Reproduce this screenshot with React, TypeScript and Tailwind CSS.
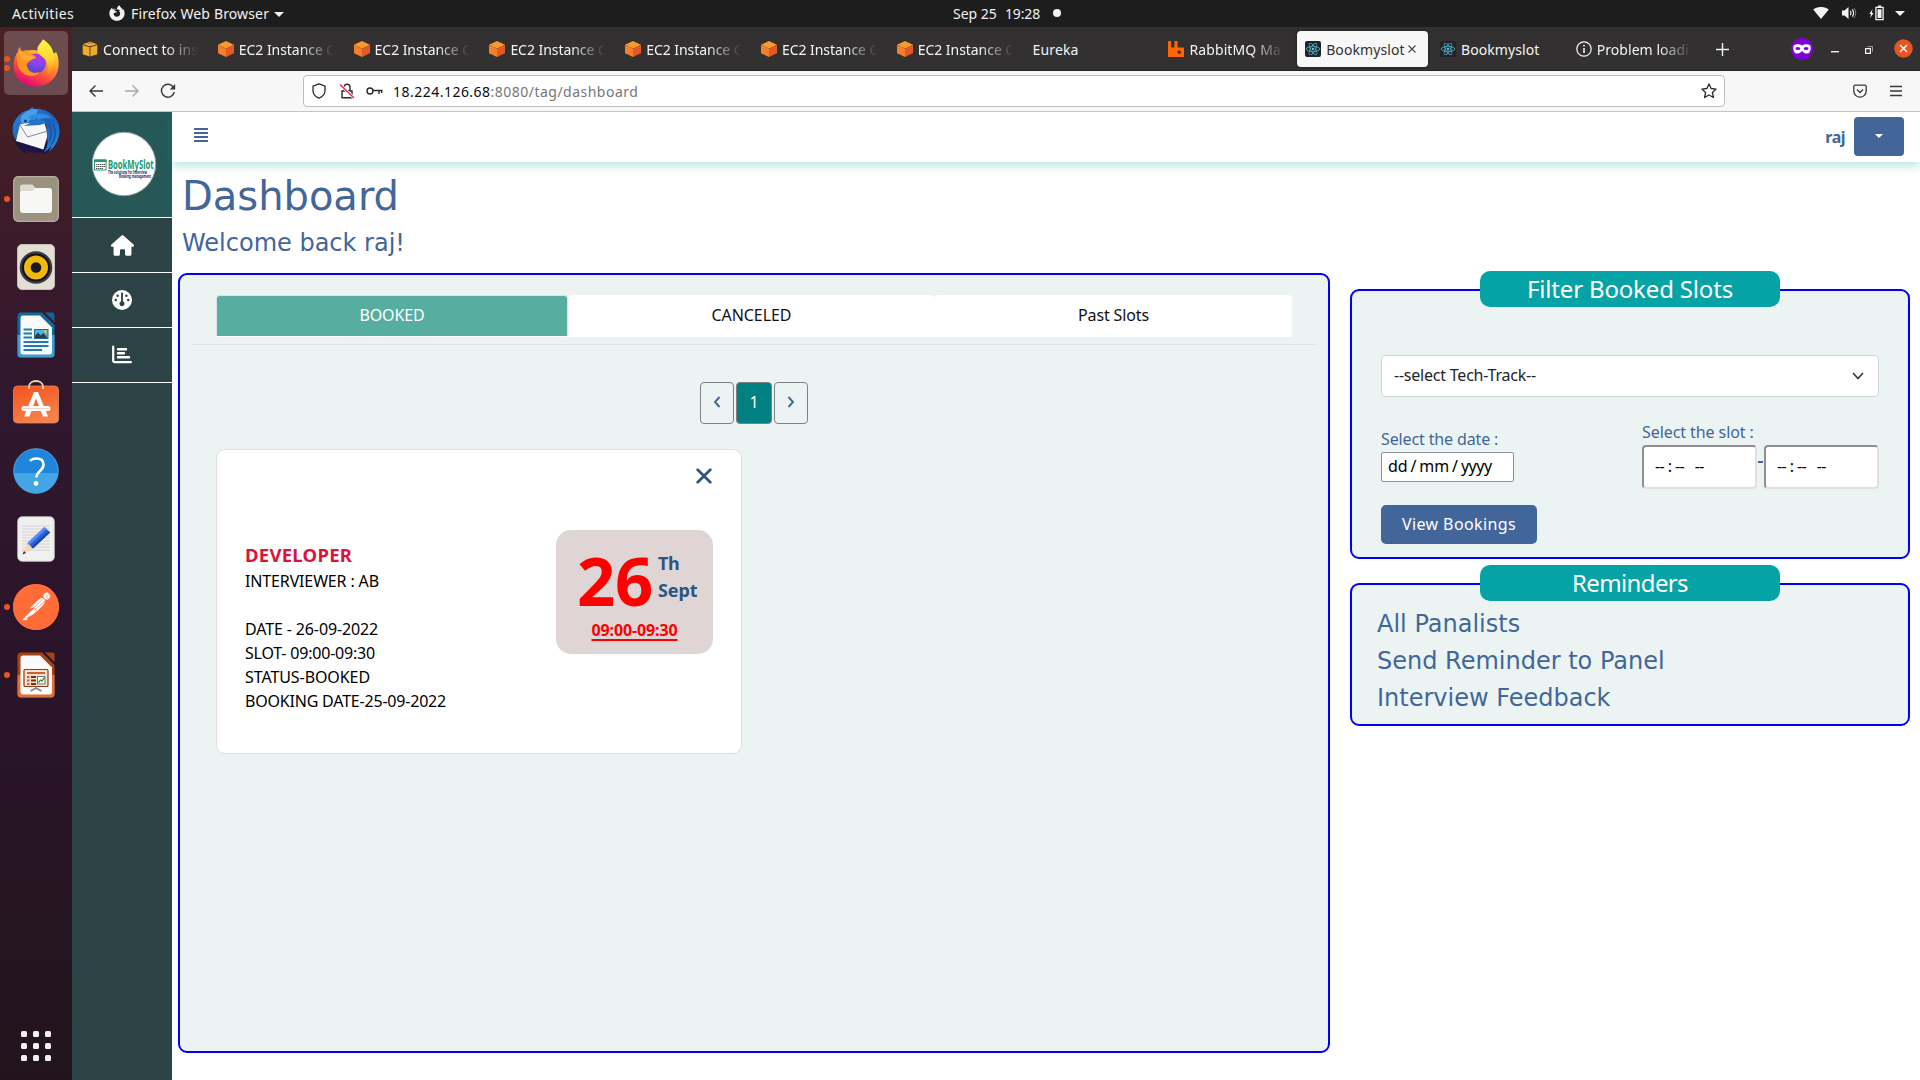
import type { ReactNode } from "react";
import { FaAlignJustify, FaReact } from "react-icons/fa";
import { FaFirefoxBrowser, FaHouse, FaGauge } from "react-icons/fa6";
import { SiPostman, SiRabbitmq } from "react-icons/si";

/* ---------- Top bar ---------- */

function TopBar() {
  return (
    <div className="flex h-[27px] bg-[#1d1d1d] text-[14px] leading-[27px] text-[#f2f2f2]">
      <div className="flex w-[953px]">
        <span className="ml-3 w-[97px] tracking-[0.37px]">Activities</span>
        <FaFirefoxBrowser className="mt-[5px] h-4 w-4" />
        <span className="ml-[6px] w-[138px] whitespace-nowrap tracking-[0.14px]">Firefox Web Browser</span>
        <svg className="ml-[5px] mt-3 h-[5px] w-[10px]" viewBox="0 0 10 5"><path d="M0 0h10L5 5z" fill="#f2f2f2" /></svg>
      </div>
      <div className="flex w-[860px]">
        <span className="w-[52px]">Sep 25</span>
        <span className="w-[48px] tracking-[-0.16px]">19:28</span>
        <span className="mt-[9px] h-2 w-2 rounded-full bg-[#f2f2f2]" />
      </div>
      <svg className="mt-[7px] h-3 w-4" viewBox="0 0 16 12"><path d="M.2 2.6C4.500-.9 11.500-.9 15.800 2.600L8 12z" fill="#f2f2f2" /></svg>
      <svg className="ml-3 mt-[6px] h-[14px] w-4" viewBox="0 0 16 14" fill="none" stroke="#f2f2f2">
        <path d="M1 4.500h2.500L7.500 1v12L3.500 9.500H1z" fill="#f2f2f2" stroke="none" />
        <path d="M9.300 4.800q1.500 2.200 0 4.400M11.300 3.300q2.600 3.700 0 7.400" strokeWidth="1.200" />
        <path d="M13 2q3.600 5 0 10" strokeWidth="1" opacity=".45" />
      </svg>
      <svg className="ml-3 mt-[5px] h-4 w-4" viewBox="0 0 16 16">
        <path d="M3.600 4L.3 9h1.800L1.200 13 4.600 8H2.800z" fill="#f2f2f2" />
        <path d="M6.900 2.400h7.200v12.200H6.900z" fill="none" stroke="#f2f2f2" strokeWidth="1.300" />
        <path d="M8.800.4h3.400v2H8.800zM8.500 4.300h4v8.700h-4z" fill="#f2f2f2" />
      </svg>
      <svg className="ml-[10px] mt-[11px] h-[5px] w-[10px]" viewBox="0 0 10 5"><path d="M0 0h10L5 5z" fill="#f2f2f2" /></svg>
    </div>
  );
}

/* ---------- Dock ---------- */

function FirefoxIcon() {
  return (
    <svg className="h-12 w-12" viewBox="0 0 48 48">
      <defs>
        <linearGradient id="ffBody" x1=".8" y1="0" x2=".3" y2="1">
          <stop offset="0" stopColor="#fff44f" /><stop offset=".35" stopColor="#ffb02e" />
          <stop offset=".65" stopColor="#ff5b36" /><stop offset="1" stopColor="#e6007a" />
        </linearGradient>
        <linearGradient id="ffFlame" x1=".5" y1="0" x2=".5" y2="1">
          <stop offset="0" stopColor="#fff44f" /><stop offset=".5" stopColor="#ffd62f" /><stop offset="1" stopColor="#ff8a16" stopOpacity=".2" />
        </linearGradient>
        <radialGradient id="ffGlobe" cx=".6" cy=".15" r=".9">
          <stop offset="0" stopColor="#b833e1" /><stop offset=".45" stopColor="#8a45f0" /><stop offset="1" stopColor="#4a46c0" />
        </radialGradient>
      </defs>
      <path d="M24 47.500C11 47.500 1.600 38.500 1.600 26.500c0-6 1.800-10.500 4.700-14.500C6.200 10 6.800 9 8 8c.2 2.200 1 3.500 2.300 4.500 2-1.200 4.500-1.500 6.700-1 4-1 9-.5 12 2C26 10 29 4 31 .5c5 3.500 9 8.500 10 14 1.500-.5 2.500-.8 3.200-1.500 2 4 2.700 8.500 2.400 13C46 38.500 36.500 47.500 24 47.500z" fill="url(#ffBody)" />
      <circle cx="24" cy="24.500" r="10" fill="url(#ffGlobe)" />
      <path d="M31 .5C37 4 40.500 9 41.500 14.500c3 9-.5 19-8.500 24C38 31 36.500 22 30.500 18c-3.500-2.500-5.500-5-5-9C26 6 29 4 31 .5z" fill="url(#ffFlame)" />
      <path d="M6.500 11.500c3.500 0 7.500 1.500 10 4 3.500-.5 6.500.5 8 3.500-3 .3-4 1.500-6.500 3-2.500 1.500-3.500 3-3 5.500C17 33.500 22 35 28 33c-5 6-15 5-20-2C4.500 26 4 18 6.500 11.500z" fill="#ff931f" />
      <path d="M7 12c3 .5 6 2 8 4.500 3-.5 6 .3 8 2.500-4 1-6 3-10 2.500-3-.5-5.500-4-6-9.500z" fill="#ffb43a" opacity=".7" />
    </svg>
  );
}

function ThunderbirdIcon() {
  return (
    <svg className="h-12 w-12" viewBox="0 0 48 48">
      <defs>
        <linearGradient id="tbBody" x1="0" y1="0" x2="1" y2="1">
          <stop offset="0" stopColor="#2b83d8" /><stop offset=".55" stopColor="#1b5fb8" /><stop offset="1" stopColor="#2c8be0" />
        </linearGradient>
      </defs>
      <path d="M3 32C5 41 10 45 16 47l-3-4c6 3 14 4 19 2l-2 3c9-3 14-8 15-13z" fill="#1d1347" />
      <path d="M1 18C4 9 11 4 17 3c1-2 2.500-2.500 5-2.500L21 2c13-2 26 7 26.500 21 .2 9-4 17-11 22 1.500-2 2.500-4 2.500-6-2 3-4 5-7 6 3-4 4-8 3.500-12L34 17 8 21 6 35C1 31 0 24 1 18z" fill="url(#tbBody)" />
      <path d="M9 10c3-5 9-8 14-8 4 1 3 3 1 5-2 3-7 8-13 11-2-2-3-5-2-8z" fill="#4a9fe8" />
      <path d="M16 10c8-5 18-5 25 2-7-2-12-1-17 3z" fill="#2f8ce0" />
      <path d="M8 17.500l8 -1.500 16-1c2 5 3 10 3 15l-3.500 12.500L4 34z" fill="#f7f7f9" />
      <path d="M8 18l7.500 12L34 24.500" fill="none" stroke="#777d88" strokeWidth=".9" />
      <path d="M10 19c4 0 10-4 14-8l10 5-6 2z" fill="#2474c8" />
      <circle cx="13.500" cy="14" r="1.500" fill="#143a5e" />
      <path d="M41 17c3 6 3 14-2 21M37 18c3 5 3 12 0 17" stroke="#174e9e" strokeWidth="1.200" fill="none" />
    </svg>
  );
}

function FilesIcon() {
  return (
    <svg className="h-[46px] w-[46px]" viewBox="0 0 46 46">
      <rect x=".7" y=".7" width="44.600" height="44.600" rx="4.500" fill="#9b917f" stroke="#b9b0a2" strokeWidth="1.200" />
      <path d="M7 11q0-2.500 2.500-2.500h10l3 3.500H36q2.500 0 2.500 2.500V20H7z" fill="#ddd9d0" />
      <path d="M7 17.500Q7 15 9.500 15H19l3.500-3H36q3 0 3 3v19q0 3-3 3H10q-3 0-3-3z" fill="#f7f7f5" />
    </svg>
  );
}

function SpeakerIcon() {
  return (
    <svg className="h-[46px] w-[38px]" viewBox="0 0 38 46">
      <rect x=".5" y=".5" width="37" height="45" rx="4.500" fill="#e3ded3" stroke="#c5bfb2" />
      <circle cx="19" cy="23.500" r="16.300" fill="#3a3b45" />
      <circle cx="19" cy="23.500" r="14" fill="#101116" />
      <circle cx="19" cy="23.500" r="12" fill="#efb90d" />
      <circle cx="19" cy="23.500" r="5.300" fill="#1b1b1b" />
    </svg>
  );
}

function WriterIcon() {
  return (
    <svg className="h-[46px] w-[38px]" viewBox="0 0 38 46">
      <path d="M4 .5h21L37.500 13v29a3.500 3.500 0 01-3.500 3.500H4A3.500 3.500 0 01.5 42V4A3.500 3.500 0 014 .5z" fill="#0c6b9e" />
      <path d="M.5 23h37v19a3.500 3.500 0 01-3.500 3.500H4A3.500 3.500 0 01.5 42z" fill="#3f9ed0" />
      <path d="M6 3.500h17L35 15.500V40q0 2.500-2.500 2.500H6Q3.500 42.500 3.500 40V6Q3.500 3.500 6 3.500z" fill="#fafafa" />
      <path d="M28 .5h7.500q2 0 2 2V10z" fill="#12659a" />
      <path d="M6.500 17.500H15M6.500 21.500H15M6.500 25.500H15M6.500 30h25M6.500 34h25M6.500 38H25" stroke="#1b7db3" strokeWidth="1.800" />
      <rect x="17.500" y="17.500" width="13.500" height="9" fill="#4fb1e8" stroke="#1b6b9c" />
      <path d="M18 26v-2l3-3.500 2.500 3 3-2.500 4 5z" fill="#3a3a3a" /><circle cx="28.500" cy="19.500" r="1.500" fill="#f0c419" />
    </svg>
  );
}

function SoftwareIcon() {
  return (
    <svg className="mb-1 h-[46px] w-[46px]" viewBox="0 0 46 46">
      <defs><linearGradient id="sw" x1="0" y1="0" x2=".4" y2="1"><stop offset="0" stopColor="#f4511e" /><stop offset="1" stopColor="#f78148" /></linearGradient></defs>
      <rect x=".5" y="8" width="45" height="37" rx="4" fill="url(#sw)" stroke="#e08a63" strokeWidth=".8" />
      <path d="M16 11V9c0-8 14-8 14 0v2" fill="none" stroke="#f3d9a8" strokeWidth="1.800" />
      <path d="M21 14h4l10 24.500h-5l-7-18-6.500 18h-5.500z" fill="#fff" />
      <rect x="8.500" y="28" width="29" height="5" rx="2.500" fill="#fff" />
      <path d="M10 30.500h26" stroke="#f6c7b1" strokeWidth=".8" />
    </svg>
  );
}

function HelpIcon() {
  return (
    <svg className="h-[46px] w-[46px]" viewBox="0 0 46 46">
      <circle cx="23" cy="23" r="22.300" fill="#1f86db" stroke="#5fb3ee" strokeWidth=".8" />
      <path d="M.8 25h44.400a22.300 22.300 0 01-44.400 0z" fill="#43a4e6" />
      <path d="M17 13q2-2.500 6.500-2.500 7 0 7 6 0 3.500-3.500 6.500t-3.700 6.500" fill="none" stroke="#fff" strokeWidth="2.600" />
      <circle cx="23" cy="35.500" r="2.400" fill="#fff" />
    </svg>
  );
}

function EditorIcon() {
  return (
    <svg className="h-[46px] w-[38px]" viewBox="0 0 38 46">
      <rect x=".7" y=".7" width="36.600" height="44.600" rx="4.500" fill="#f0f0f0" stroke="#c9c9c9" strokeWidth=".8" />
      <path d="M5 10h28M5 13h28M5 16h28M5 19h28M5 22h28M5 25h28M5 28h28M5 31h28M5 34h28" stroke="#cfcfcf" strokeWidth=".9" />
      <path d="M5.500 38.500l5-11.500 5.500 5.500z" fill="#f5d6b4" /><path d="M5.500 38.500l1.500-3.500 2 2z" fill="#333" />
      <path d="M10.500 27L27.500 11l5.500 5.500L16 32.500z" fill="#2a62dd" /><path d="M10.500 27L27.500 11l2 2L12.500 29z" fill="#5b8cf2" /><path d="M14.300 31L31.500 15l1.500 1.500L16 32.500z" fill="#1b47ad" />
    </svg>
  );
}

function PostmanIcon() {
  return (
    <div className="flex h-[46px] w-[46px] items-center justify-center rounded-full bg-[#ff6c37]">
      <div className="flex h-11 w-11 items-center justify-center rounded-full bg-white">
        <SiPostman className="h-[46px] w-[46px] shrink-0 text-[#ff6c37]" />
      </div>
    </div>
  );
}

function ImpressIcon() {
  return (
    <svg className="h-[46px] w-[38px]" viewBox="0 0 38 46">
      <path d="M4 .5h21L37.500 13v29a3.500 3.500 0 01-3.500 3.500H4A3.500 3.500 0 01.5 42V4A3.500 3.500 0 014 .5z" fill="#a8430f" />
      <path d="M.5 23h37v19a3.500 3.500 0 01-3.500 3.500H4A3.500 3.500 0 01.5 42z" fill="#dd6e35" />
      <path d="M6 3.500h17L35 15.500V40q0 2.500-2.500 2.500H6Q3.500 42.500 3.500 40V6Q3.500 3.500 6 3.500z" fill="#fafafa" />
      <path d="M28 .5h7.500q2 0 2 2V10z" fill="#a8430f" />
      <rect x="7" y="17.500" width="24" height="17" rx="1" fill="#f6e1d2" stroke="#8a3a10" strokeWidth="1.200" />
      <path d="M10 21h18M10 25h2.500M10 28.500h2.500M10 32h2.500" stroke="#d2622a" strokeWidth="1.800" />
      <path d="M14 25h5M14 28.500h5M14 32h5" stroke="#7a2f08" strokeWidth="1.900" />
      <rect x="20.500" y="24.500" width="7.500" height="7.500" fill="#fff" stroke="#777" />
      <path d="M21.500 30.500l2-2.500 1.500 1 2.500-3.500" stroke="#2c9b2c" strokeWidth="1.300" fill="none" />
      <path d="M19 34.500v2M19 36l-5.500 3M19 36l5.500 3" stroke="#888" strokeWidth="1.800" />
    </svg>
  );
}

function Dock() {
  const items: { icon: ReactNode; dots: number; active?: boolean }[] = [
    { icon: <FirefoxIcon />, dots: 2, active: true },
    { icon: <ThunderbirdIcon />, dots: 0 },
    { icon: <FilesIcon />, dots: 1 },
    { icon: <SpeakerIcon />, dots: 0 },
    { icon: <WriterIcon />, dots: 0 },
    { icon: <SoftwareIcon />, dots: 0 },
    { icon: <HelpIcon />, dots: 0 },
    { icon: <EditorIcon />, dots: 0 },
    { icon: <PostmanIcon />, dots: 1 },
    { icon: <ImpressIcon />, dots: 1 },
  ];
  return (
    <div className="flex w-[72px] flex-col bg-[linear-gradient(180deg,#4a2123_0%,#3a1a2b_22%,#30172d_35%,#2a1429_65%,#22141d_100%)] pt-1">
      {items.map((it, i) => (
        <div key={i} className="flex h-[68px] items-start pr-1">
          <div className="z-10 flex h-16 w-1 flex-col items-start justify-center gap-[3px]">
            {Array.from({ length: it.dots }, (_, d) => (
              <span key={d} className="ml-1 h-[6px] w-[6px] rounded-full bg-[#e95420]" />
            ))}
          </div>
          <div className={it.active ? "flex h-16 w-16 items-center justify-center rounded-[5px] bg-white/20" : "flex h-16 w-16 items-center justify-center"}>
            {it.icon}
          </div>
        </div>
      ))}
      <div className="mx-auto mb-[19px] mt-auto grid grid-cols-3 gap-[6px]">
        {Array.from({ length: 9 }, (_, i) => (
          <span key={i} className="h-[6px] w-[6px] rounded-[1.500px] bg-[#f2f0ef]" />
        ))}
      </div>
    </div>
  );
}

/* ---------- Browser chrome ---------- */

function AwsYellow() {
  return (
    <svg className="h-4 w-4" viewBox="0 0 16 16">
      <path d="M.5 3.200L8 .5l7.500 2.700L8 5.500z" fill="#d98b14" /><path d="M.7 4l6.900 2.200v9.300L.7 13.300zM15.300 4L8.400 6.200v9.300l6.900-2.200z" fill="#f3ab26" />
      <path d="M3.500 2.800L8 4.200l4.500-1.400" stroke="#fbd27a" fill="none" strokeWidth=".8" />
    </svg>
  );
}
function AwsOrange() {
  return (
    <svg className="h-4 w-4" viewBox="0 0 16 16">
      <path d="M8 0l8 3.800L8 7.800 0 3.800z" fill="#fd9730" /><path d="M0 3.800L8 7.800V16L0 12.200z" fill="#f57f2a" /><path d="M16 3.800L8 7.800V16l8-3.800z" fill="#e25a25" />
    </svg>
  );
}
function ReactFavicon() {
  return <span className="flex h-4 w-4 items-center justify-center rounded-[2px] bg-[#20232a]"><FaReact className="h-[14px] w-[14px] text-[#5bc6de]" /></span>;
}
function InfoIcon() {
  return (
    <svg className="h-4 w-4" viewBox="0 0 16 16" fill="none" stroke="#fbfbfe" strokeWidth="1.200"><circle cx="8" cy="8" r="7.200" /><path d="M8 7v5" strokeWidth="1.500" /><circle cx="8" cy="4.600" r=".9" fill="#fbfbfe" stroke="none" /></svg>
  );
}

const FADE = "overflow-hidden w-[95px] [mask-image:linear-gradient(to_right,black_62px,transparent_95px)]";

const ec2 = { icon: <AwsOrange />, text: "EC2 Instance C", fade: true, cls: "tracking-[-0.05px]" };
const tabs: { icon?: ReactNode; text: string; fade?: boolean; active?: boolean; cls: string }[] = [
  { icon: <AwsYellow />, text: "Connect to ins", fade: true, cls: "tracking-[0.07px]" },
  ec2, ec2, ec2, ec2, ec2, ec2,
  { text: "Eureka", cls: "tracking-[0.14px]" },
  { icon: <SiRabbitmq className="h-4 w-4 text-[#ff6600]" />, text: "RabbitMQ Ma", fade: true, cls: "tracking-[0.12px]" },
  { icon: <ReactFavicon />, text: "Bookmyslot", active: true, cls: "tracking-[0.09px]" },
  { icon: <ReactFavicon />, text: "Bookmyslot", cls: "tracking-[0.09px]" },
  { icon: <InfoIcon />, text: "Problem loadi", fade: true, cls: "tracking-[0.04px]" },
];

function TabStrip() {
  return (
    <div className="flex h-11 items-center border-b border-[#262425] bg-[#323031] pl-[2px] text-[14px] text-[#f4f4f4]">
      {tabs.map((t, i) => (
        <div key={i} className="w-[135.800px] shrink-0">
          <div className={t.active ? "ml-px flex h-9 w-[131px] items-center gap-[5px] rounded bg-[#f7f7f7] pl-2 text-[#333] shadow-[0_0_3px_rgba(0,0,0,0.5)]" : "flex h-9 w-[131px] items-center gap-[5px] pl-2"}>
            {t.icon}
            <span className={t.fade ? `mt-[2px] ${FADE}` : "mt-[2px]"}><span className={`whitespace-nowrap ${t.cls}`}>{t.text}</span></span>
            {t.active && <svg className="-ml-[2px] h-2 w-2 shrink-0" viewBox="0 0 8 8"><path d="M.5.5l7 7M7.500.5l-7 7" stroke="#444" strokeWidth="1.100" /></svg>}
          </div>
        </div>
      ))}
      <svg className="ml-3 mt-[2px] h-[13px] w-[13px]" viewBox="0 0 12 12"><path d="M6 0v12M0 6h12" stroke="#f4f4f4" strokeWidth="1.300" /></svg>
      <svg className="ml-[62px] h-[22px] w-[22px]" viewBox="0 0 22 22">
        <circle cx="11" cy="11" r="11" fill="#8000d7" />
        <path d="M11 7.600C13 6 17 5.800 19.200 7.200c1 2 .7 6-1.200 7.800-1.800 1-4.600.8-7-2-2.400 2.800-5.200 3-7 2-1.900-1.800-2.200-5.800-1.200-7.800C5 5.800 9 6 11 7.600z" fill="#fff" />
        <ellipse cx="6.900" cy="10.500" rx="2.400" ry="1.500" fill="#8000d7" /><ellipse cx="15.100" cy="10.500" rx="2.400" ry="1.500" fill="#8000d7" />
      </svg>
      <svg className="ml-[18px] mt-1 h-2 w-2" viewBox="0 0 8 8"><path d="M0 4.700h8" stroke="#f4f4f4" strokeWidth="1.400" /></svg>
      <svg className="ml-[26px] mt-[2px] h-2 w-2" viewBox="0 0 8 8" fill="none" stroke="#f4f4f4"><path d="M.6 2.600h4.800v4.800H.6z" strokeWidth="1.200" /><path d="M2.500.6h5v5" strokeWidth=".8" opacity=".7" /></svg>
      <svg className="ml-[21px] h-[19px] w-[19px]" viewBox="0 0 19 19"><circle cx="9.500" cy="9.500" r="9.300" fill="#e95420" /><path d="M6 6l7 7M13 6l-7 7" stroke="#fff" strokeWidth="1.400" /></svg>
    </div>
  );
}

function Toolbar() {
  return (
    <div className="flex h-[41px] items-center border-b border-[#c4c4c4] bg-[#f7f7f7] text-[#2b2a33]">
      <div className="flex w-[231px] items-center pl-[17px]">
        <svg className="h-[14px] w-[14px]" viewBox="0 0 14 14" fill="none" stroke="#38383d" strokeWidth="1.400"><path d="M6.500 1.500L1 7l5.500 5.500M1 7h13" /></svg>
        <svg className="ml-[22px] h-[14px] w-[14px]" viewBox="0 0 14 14" fill="none" stroke="#a8a8aa" strokeWidth="1.400"><path d="M7.500 1.500L13 7l-5.500 5.500M13 7H0" /></svg>
        <svg className="ml-[21px] h-4 w-4" viewBox="0 0 16 16" fill="none" stroke="#38383d" strokeWidth="1.400"><path d="M13.600 4.500A6.500 6.500 0 1014.300 9" /><path d="M15.200 1v5.500H9.700z" fill="#38383d" stroke="none" /></svg>
      </div>
      <div className="flex h-8 w-[1422px] items-center rounded border border-[#bdbdbf] bg-white pl-[7px] pr-[7px] text-[14px] tracking-[0.48px]">
        <svg className="h-4 w-4" viewBox="0 0 16 16" fill="none" stroke="#2b2a33" strokeWidth="1.300"><path d="M8 .8l6 2.400v4.300c0 3.300-2.500 6.300-6 7.700-3.500-1.400-6-4.400-6-7.700V3.200z" strokeLinejoin="round" /></svg>
        <svg className="ml-3 h-4 w-4" viewBox="0 0 16 16" fill="none" stroke="#2b2a33" strokeWidth="1.400"><path d="M3 8h10v6.800H3zM5 8V4.200a3 3 0 016 0V8" /><path d="M1 1.500l14 13.500" stroke="#fff" strokeWidth="3" /><path d="M1 1.500l14 13.500" stroke="#e22850" strokeWidth="1.500" /></svg>
        <svg className="ml-[11px] h-4 w-[17px]" viewBox="0 0 17 16" fill="none" stroke="#2b2a33" strokeWidth="1.400"><circle cx="4" cy="8" r="3" /><path d="M7 7.500h9.500M13 8v3M15.700 8v2" /></svg>
        <span className="ml-[10px] text-[#0c0c0d]">18.224.126.68</span>
        <span className="text-[#77767b]">:8080/tag/dashboard</span>
        <svg className="ml-auto h-4 w-4" viewBox="0 0 16 16" fill="none" stroke="#2b2a33" strokeWidth="1.300" strokeLinejoin="round"><path d="M8 .9l2.100 4.600 5 .6-3.700 3.400 1 5L8 12l-4.400 2.500 1-5L.9 6.100l5-.6z" /></svg>
      </div>
      <svg className="ml-[128px] h-[14px] w-[14px]" viewBox="0 0 14 14" fill="none" stroke="#38383d" strokeWidth="1.300"><path d="M2.200 1.200h9.600q1.400 0 1.400 1.400V7a6.200 6.200 0 01-12.400 0V2.600q0-1.400 1.400-1.400z" /><path d="M4 5.500l3 3 3-3" /></svg>
      <svg className="ml-[23px] h-3 w-3" viewBox="0 0 12 12" stroke="#38383d" strokeWidth="1.300"><path d="M0 1.500h12M0 6h12M0 10.500h12" /></svg>
    </div>
  );
}

/* ---------- Page ---------- */

function Logo() {
  return (
    <svg className="h-[66px] w-[66px] overflow-visible" viewBox="92 131 66 66">
      <circle cx="125" cy="164" r="31.700" fill="#fff" stroke="#9aa5a3" />
      <path d="M95.500 160h11.500v10H95.500z" fill="#fff" stroke="#27947d" />
      <path d="M95 159.500h12.500v2.500H95z" fill="#27947d" />
      <path d="M97 164.500h9M97 166.500h9M97 168.500h7" stroke="#555" strokeWidth="1.200" strokeDasharray="1.400 .5" />
      <text x="109" y="169" fontSize="11.500" fontWeight="700" fontFamily="Noto Sans, sans-serif" textLength="45.500" lengthAdjust="spacingAndGlyphs" fill="#119a72">BookMySlot</text>
      <text x="109" y="173.800" fontSize="4.600" fontWeight="700" fontFamily="Noto Sans, sans-serif" textLength="39" lengthAdjust="spacingAndGlyphs" fill="#1b1f6b">The solutions for Interview</text>
      <text x="120" y="178.300" fontSize="4.600" fontWeight="700" fontFamily="Noto Sans, sans-serif" textLength="32" lengthAdjust="spacingAndGlyphs" fill="#1b1f6b">Booking management</text>
    </svg>
  );
}

function Sidebar() {
  return (
    <div className="flex w-[100px] flex-col bg-[#2c4345] text-white">
      <div className="flex h-[106px] border-b border-white bg-[#265858] pl-[19px] pt-[19px]"><Logo /></div>
      <div className="flex h-[55px] items-center justify-center border-b border-white"><FaHouse className="h-[21px] w-[23px]" /></div>
      <div className="flex h-[55px] items-center justify-center border-b border-white"><FaGauge className="h-5 w-5" /></div>
      <div className="flex h-[55px] items-center justify-center border-b border-white">
        <svg className="h-5 w-5" viewBox="0 0 20 20" fill="none" stroke="#fff" strokeLinecap="round"><path d="M1.200 1.500v14q0 1.700 1.700 1.700h16" strokeWidth="2.200" /><path d="M6 4.300h8M6 8.300h6M6 12.300h11" strokeWidth="2.400" /></svg>
      </div>
    </div>
  );
}

function Navbar() {
  return (
    <div className="relative z-10 flex h-[50px] bg-white text-[#426699] shadow-[0_4px_10px_rgba(0,160,160,0.28)]">
      <FaAlignJustify className="ml-[22px] mt-[15px] h-4 w-[14px]" />
      <span className="ml-auto mt-[13px] text-[16px] font-bold leading-6 tracking-[-0.5px]">raj</span>
      <button className="ml-[9px] mr-4 mt-[5px] flex h-[39px] w-[50px] items-center justify-center rounded bg-[#426699]">
        <svg className="-mt-[2px] h-1 w-2" viewBox="0 0 8 4"><path d="M0 0h8L4 4z" fill="#fff" /></svg>
      </button>
    </div>
  );
}

function BookingCard() {
  return (
    <div className="ml-9 mt-[25px] h-[305px] w-[526px] rounded-[9px] border border-[#dfdfdf] bg-white px-7 pt-[18px]">
      <div className="flex h-4 justify-end pr-px">
        <svg className="h-4 w-4" viewBox="0 0 16 16"><path d="M1.700 1.700l12.600 12.600M14.300 1.700L1.700 14.300" stroke="#2c5580" strokeWidth="2.700" strokeLinecap="round" /></svg>
      </div>
      <div className="mt-[46px] flex justify-between">
        <div className="mt-[11px] leading-6 text-black">
          <div className="mb-px text-[18.500px] font-bold leading-[28px] tracking-[0.25px] text-[#dc143c]">DEVELOPER</div>
          <div className="-mt-px mb-6 tracking-[-0.14px]">INTERVIEWER : AB</div>
          <div className="tracking-[-0.13px]">DATE - 26-09-2022</div>
          <div className="tracking-[-0.2px]">SLOT- 09:00-09:30</div>
          <div className="tracking-[-0.08px]">STATUS-BOOKED</div>
          <div className="tracking-[-0.2px]">BOOKING DATE-25-09-2022</div>
        </div>
        <div className="h-[124px] w-[157px] rounded-[15px] bg-[#dfd5d4] font-bold">
          <div className="flex pl-[21px] pt-[17px]">
            <div className="w-[81px] text-[67px] leading-[67px] tracking-[-0.3px] text-[#ff0000]">26</div>
            <div className="mt-[3px] text-[18px] leading-[27px] text-[#2c5580]">
              <div className="tracking-[-0.5px]">Th</div>
              <div className="tracking-[-0.1px]">Sept</div>
            </div>
          </div>
          <div className="mt-1 text-center leading-6 tracking-[-0.12px] text-[#ff0000] underline decoration-2 underline-offset-[3px]">09:00-09:30</div>
        </div>
      </div>
    </div>
  );
}

function BookingsPanel() {
  const pager = "flex h-[42px] items-center justify-center rounded border border-[#808080]";
  return (
    <div className="h-[780px] w-[1152px] rounded-[9px] border-2 border-[#0000ff] bg-[#ebf4f3] pt-5">
      <div className="mx-3 flex h-[50px] border-b border-[#dee2e6] px-6 text-center leading-10 text-[#111]">
        <div className="h-[42px] w-[352px] rounded-t border border-[#dee2e6] border-b-white bg-[#55aea0] leading-[38px] tracking-[-0.15px] text-white">BOOKED</div>
        <div className="h-[42px] w-[367px] rounded-t bg-white tracking-[-0.06px]">CANCELED</div>
        <div className="h-[42px] w-[357px] rounded-t bg-white tracking-[-0.13px]">Past Slots</div>
      </div>
      <div className="mt-[37px] flex justify-center gap-[2px]">
        <div className={`${pager} w-[34px]`}><svg className="-mt-[3px] h-3 w-2" viewBox="0 0 8 12"><path d="M6.500 1L2 6l4.500 5" fill="none" stroke="#426699" strokeWidth="1.900" /></svg></div>
        <div className={`${pager} w-9 bg-[#008080] pb-[2px] text-white`}>1</div>
        <div className={`${pager} w-[34px]`}><svg className="-mt-[3px] h-3 w-2" viewBox="0 0 8 12"><path d="M1.500 1L6 6l-4.500 5" fill="none" stroke="#426699" strokeWidth="1.900" /></svg></div>
      </div>
      <BookingCard />
    </div>
  );
}

function Pill({ children, className }: { children: ReactNode; className: string }) {
  return <div className={`mx-auto -mt-5 h-9 w-[300px] rounded-[10px] bg-[#05a3a6] text-center text-[24px] leading-9 text-white ${className}`}>{children}</div>;
}

function TimeInput() {
  return <div className="h-11 w-[115px] rounded border-2 border-[#e0e0e0] border-l-[#8f8f94] border-t-[#8f8f94] bg-white pl-[11px] leading-[38px] text-black"><span className="whitespace-pre tracking-[-0.6px]">-- : --   --</span></div>;
}

function FilterPanel() {
  return (
    <div className="h-[270px] rounded-[9px] border-2 border-[#0000ff] bg-[#ebf4f3] px-[29px] text-[#426699]">
      <Pill className="tracking-[-0.17px]">Filter Booked Slots</Pill>
      <div className="mt-12 flex h-[42px] items-center justify-between rounded border border-[#ced4da] bg-white pb-[2px] pl-3 pr-[14px] text-[#212529]">
        <span className="tracking-[-0.22px]">--select Tech-Track--</span>
        <svg className="mt-px h-3 w-3" viewBox="0 0 12 12"><path d="M1.500 3.500L6 8.500l4.500-5" fill="none" stroke="#343a40" strokeWidth="1.700" strokeLinecap="round" strokeLinejoin="round" /></svg>
      </div>
      <div className="mt-[23px] flex items-start justify-between leading-6">
        <div className="mt-[7px]">
          <div className="tracking-[-0.13px]">Select the date :</div>
          <div className="mt-px h-[30px] w-[133px] rounded-[2px] border border-[#8f8f9d] bg-white pl-[6px] leading-[27px] text-black">
            <span className="whitespace-nowrap tracking-[-0.1px]">dd<span className="mx-[3px]">/</span>mm<span className="mx-[3px]">/</span><span className="tracking-[-0.5px]">yyyy</span></span>
          </div>
        </div>
        <div>
          <div className="tracking-[-0.08px]">Select the slot :</div>
          <div className="mt-px flex">
            <TimeInput />
            <span className="flex h-11 w-[7px] items-start justify-center"><span className="mt-4 h-[1.500px] w-[5px] bg-[#426699]">
            </span></span>
            <TimeInput />
          </div>
        </div>
      </div>
      <button className="mt-4 block h-[39px] w-[156px] rounded-[5px] bg-[#426699] pb-px leading-[36px] tracking-[0.39px] text-white">View Bookings</button>
    </div>
  );
}

function RemindersPanel() {
  return (
    <div className="mt-6 h-[143px] rounded-[9px] border-2 border-[#0000ff] bg-[#ebf4f3]">
      <Pill className="tracking-[-0.63px]">Reminders</Pill>
      <div className="mt-[5px] pl-[25px] font-['DejaVu_Sans',sans-serif] text-[24px] leading-[37px] text-[#426699]">
        <div>All Panalists</div>
        <div>Send Reminder to Panel</div>
        <div>Interview Feedback</div>
      </div>
    </div>
  );
}

export default function App() {
  return (
    <div className="flex h-[1080px] w-[1920px] flex-col overflow-hidden bg-white font-['Noto_Sans',sans-serif] text-[16px]">
      <TopBar />
      <div className="flex flex-1">
        <Dock />
        <div className="flex w-[1848px] flex-col">
          <TabStrip />
          <Toolbar />
          <div className="flex flex-1 overflow-hidden">
            <Sidebar />
            <div className="flex-1">
              <Navbar />
              <div className="pl-[10px] font-['DejaVu_Sans',sans-serif] text-[#426699]">
                <div className="mt-[10px] text-[40px] leading-[48px]">Dashboard</div>
                <div className="mt-[9px] text-[24px] leading-[29px]">Welcome back raj!</div>
              </div>
              <div className="mt-[15px] flex pl-[6px]">
                <BookingsPanel />
                <div className="ml-5 mt-4 w-[560px]">
                  <FilterPanel />
                  <RemindersPanel />
                </div>
              </div>
            </div>
          </div>
        </div>
      </div>
    </div>
  );
}
